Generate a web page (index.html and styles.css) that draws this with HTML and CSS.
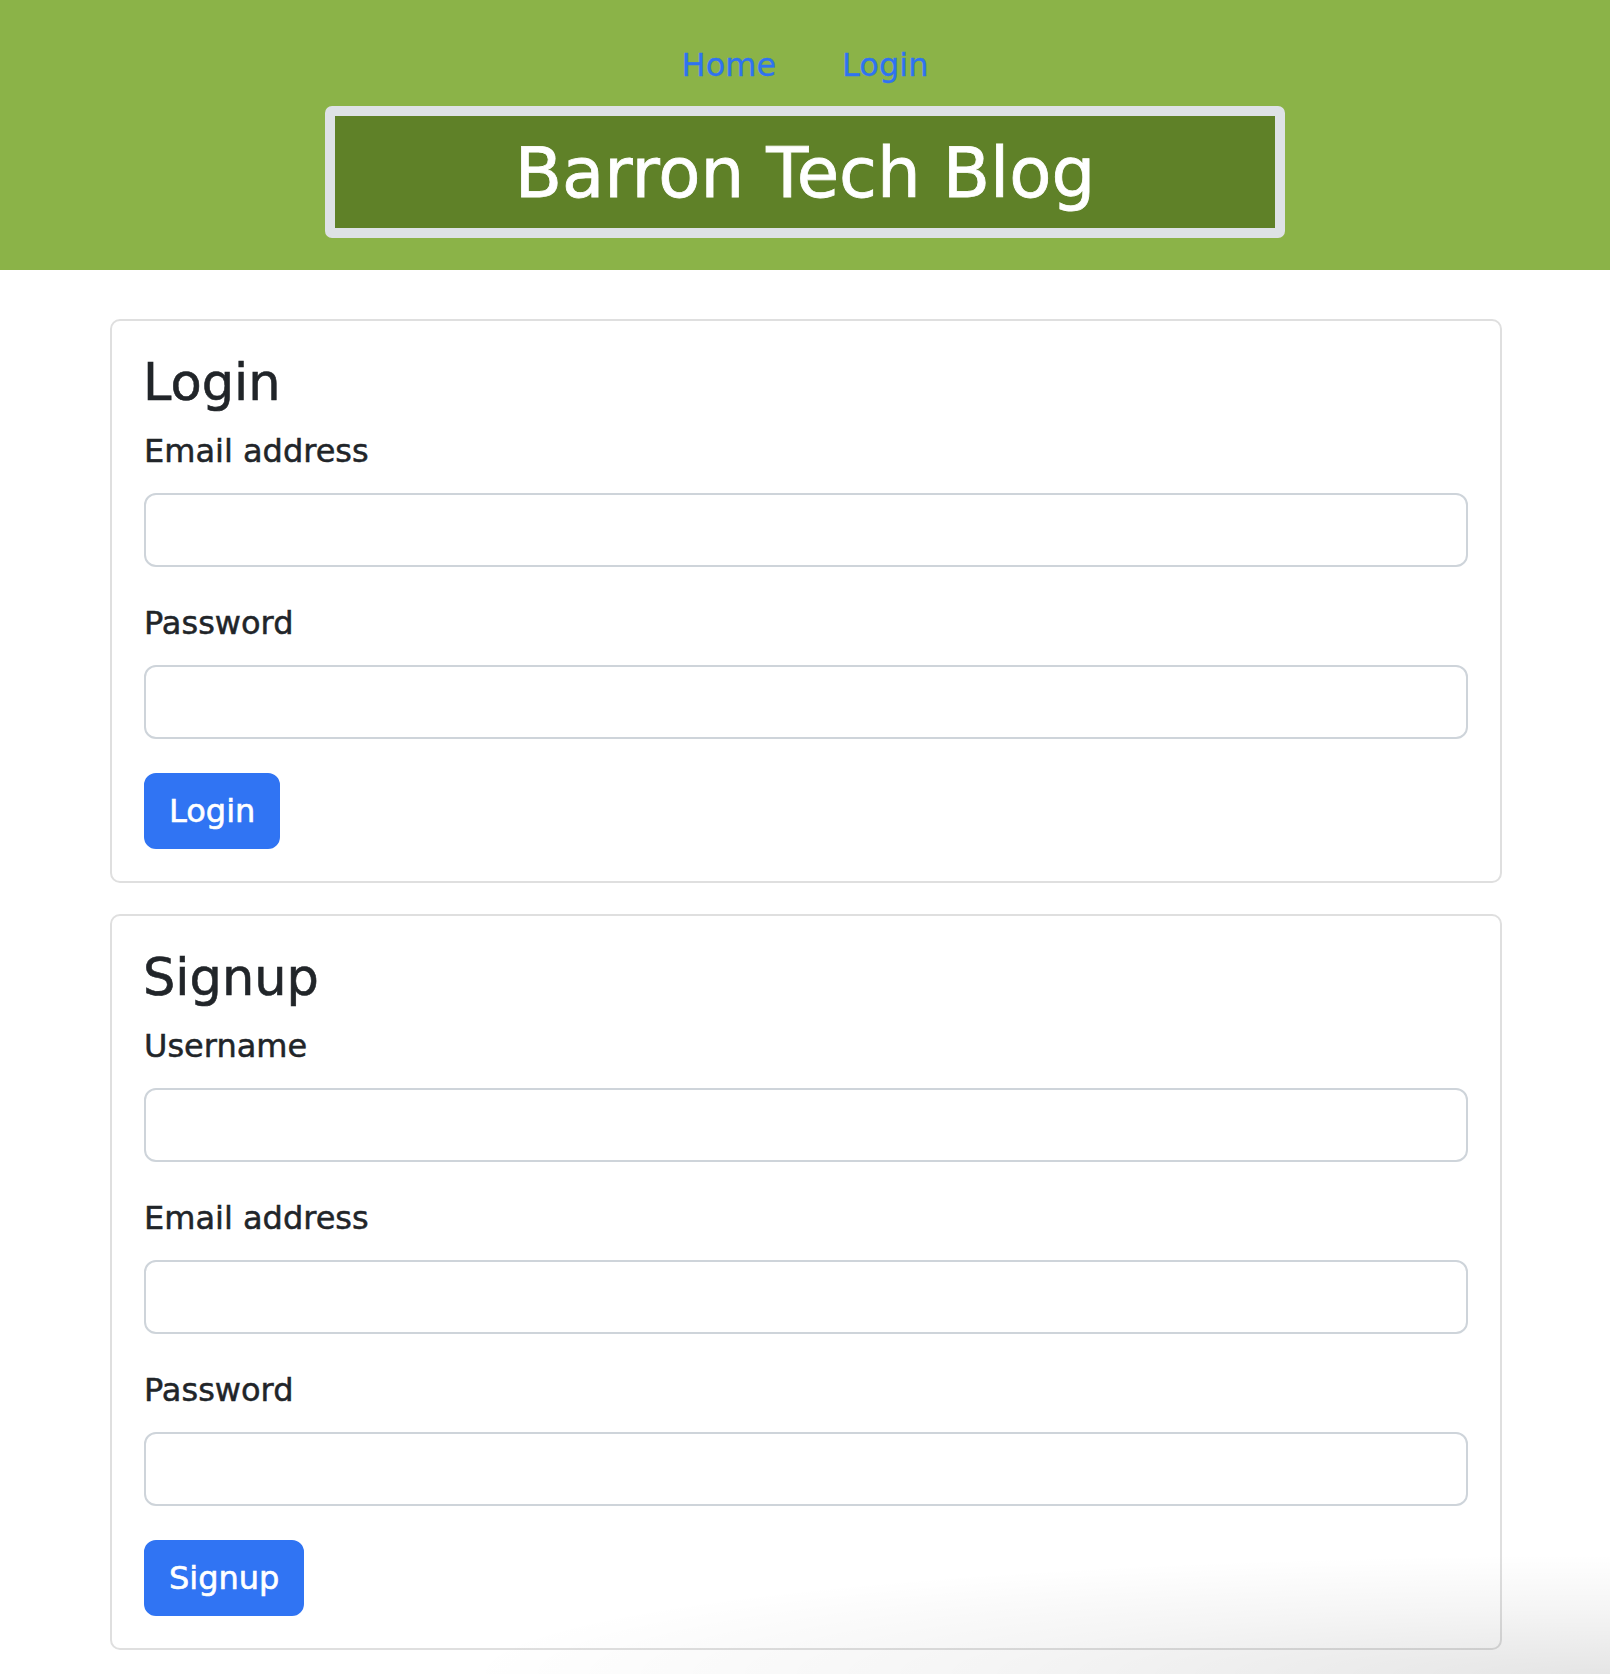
FILE: index.html
```html
<!DOCTYPE html>
<html lang="en">
<head>
<meta charset="utf-8">
<title>Barron Tech Blog</title>
<link rel="stylesheet" href="styles.css">
</head>
<body>
<header class="site-header">
  <nav class="nav">
    <a class="nav-link" href="#">Home</a>
    <a class="nav-link" href="#">Login</a>
  </nav>
  <div class="title-box">
    <h1 class="title">Barron Tech Blog</h1>
  </div>
</header>
<main class="main">
  <section class="card">
    <h2 class="card-title">Login</h2>
    <form class="form">
      <div class="field">
        <label class="form-label">Email address</label>
        <input class="form-control" type="email">
      </div>
      <div class="field">
        <label class="form-label">Password</label>
        <input class="form-control" type="password">
      </div>
      <button class="btn" type="button">Login</button>
    </form>
  </section>
  <section class="card">
    <h2 class="card-title">Signup</h2>
    <form class="form">
      <div class="field">
        <label class="form-label">Username</label>
        <input class="form-control" type="text">
      </div>
      <div class="field">
        <label class="form-label">Email address</label>
        <input class="form-control" type="email">
      </div>
      <div class="field">
        <label class="form-label">Password</label>
        <input class="form-control" type="password">
      </div>
      <button class="btn" type="button">Signup</button>
    </form>
  </section>
</main>
<div class="window-shadow"></div>
</body>
</html>
```
FILE: styles.css
```css
* { box-sizing: border-box; }

html, body {
  margin: 0;
  padding: 0;
  background: #ffffff;
}

body {
  font-family: "DejaVu Sans", "Noto Sans", sans-serif;
  color: #212529;
  min-height: 1674px;
  position: relative;
  overflow: hidden;
}

.site-header {
  background: #8bb348;
  padding: 41px 0 32px;
  display: flex;
  flex-direction: column;
  align-items: center;
}

.nav {
  display: flex;
  justify-content: center;
  gap: 66px;
  margin-bottom: 17px;
}

.nav-link {
  font-size: 32px;
  line-height: 48px;
  color: #2f73f1;
  text-decoration: none;
  -webkit-text-stroke: 0.3px #2f73f1;
}

.title-box {
  width: 960px;
  height: 132px;
  border: 10px solid #dee2e6;
  border-radius: 7px;
  background: #5f8128;
  display: flex;
  justify-content: center;
}

.title {
  margin: 0;
  padding-top: 2px;
  font-size: 69px;
  font-weight: normal;
  line-height: 110px;
  color: #ffffff;
  -webkit-text-stroke: 0.8px #ffffff;
}

.main {
  padding-top: 49px;
  display: flex;
  flex-direction: column;
  align-items: center;
  gap: 31px;
}

.card {
  width: 1392px;
  margin-left: 2px;
  border: 2px solid #dfdfdf;
  border-radius: 10px;
  padding: 32px 32px 32px;
  background: #ffffff;
}

.card-title {
  margin: 0 0 14px;
  font-size: 51px;
  font-weight: normal;
  line-height: 60px;
  color: #212529;
  margin-left: -1px;
  -webkit-text-stroke: 0.6px #212529;
}

.form {
  display: flex;
  flex-direction: column;
  align-items: flex-start;
}

.field {
  width: 100%;
  display: flex;
  flex-direction: column;
  margin-bottom: 32px;
}

.form-label {
  font-size: 32px;
  line-height: 48px;
  margin-bottom: 18px;
  color: #212529;
  -webkit-text-stroke: 0.5px #212529;
}

.form-control {
  width: 100%;
  height: 74px;
  border: 2px solid #ced4da;
  border-radius: 12px;
  background: #ffffff;
  font-family: inherit;
  font-size: 32px;
  padding: 0 24px;
}

.btn {
  font-family: inherit;
  font-size: 32px;
  line-height: 48px;
  color: #ffffff;
  background: #3074f3;
  border: 2px solid #3074f3;
  border-radius: 12px;
  padding: 12px 23px;
  height: 76px;
  margin-top: 2px;
  cursor: pointer;
  -webkit-text-stroke: 0.6px #ffffff;
}

.window-shadow {
  position: absolute;
  left: 0;
  right: 0;
  bottom: 0;
  height: 130px;
  pointer-events: none;
  background: radial-gradient(ellipse 1150px 120px at 100% 100%, rgba(0,0,0,0.10), rgba(0,0,0,0.04) 55%, rgba(0,0,0,0) 100%);
}
```
